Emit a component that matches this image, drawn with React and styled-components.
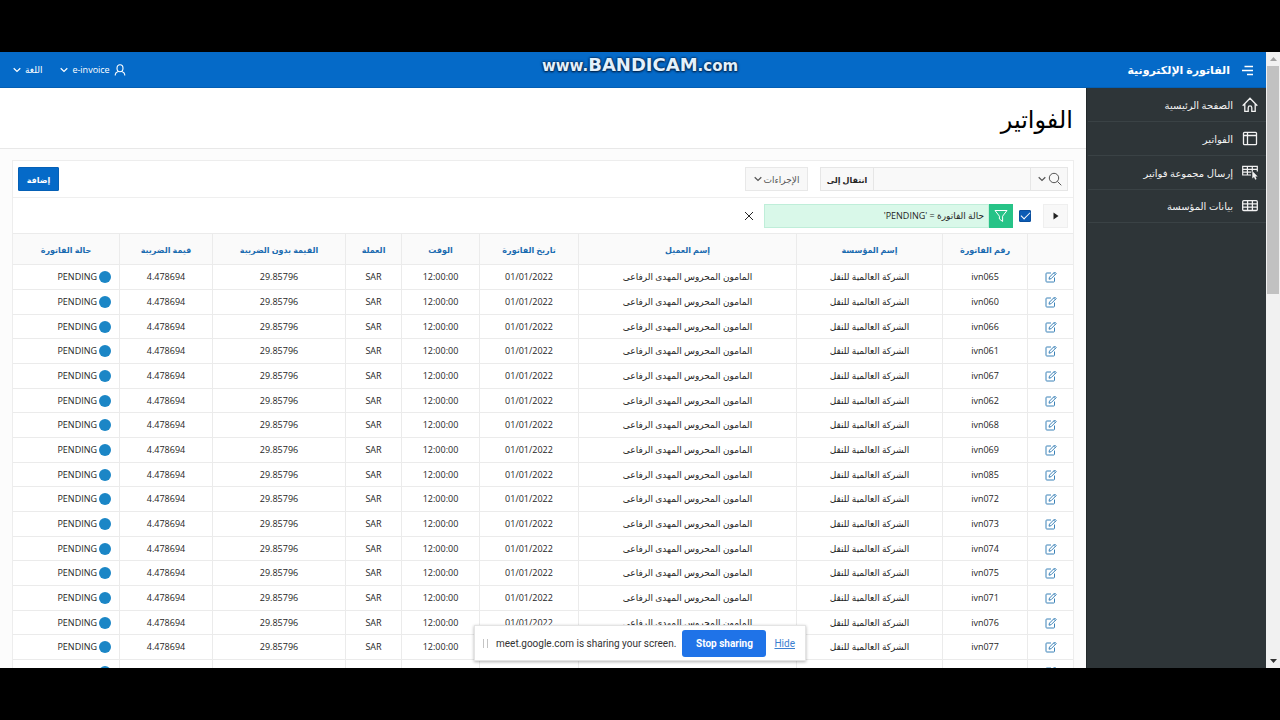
import React, { useState } from "react";
import styled, { createGlobalStyle } from "styled-components";

const GlobalStyle = createGlobalStyle`
  * {
    box-sizing: border-box;
  }

  body {
    margin: 0;
    background: #000;
    font-family: "Open Sans", "DejaVu Sans", sans-serif;
    font-size: 9px;
    color: #262626;
  }

  button,
  input {
    font: inherit;
    color: inherit;
    margin: 0;
  }
`;

const Screen = styled.div`
  position: relative;
  display: flex;
  flex-direction: column;
  height: 100vh;
  padding: 52px 0;
  overflow: hidden;
`;

const Viewport = styled.div`
  display: flex;
  flex: 1;
  min-height: 0;
  background: #fff;
`;

const Page = styled.div`
  display: flex;
  flex-direction: column;
  flex: 1;
  min-width: 0;
`;

const Scrollbar = styled.div`
  display: flex;
  flex-direction: column;
  align-items: center;
  width: 14px;
  background: #f1f1f1;
`;

const ScrollArrow = styled.div`
  display: flex;
  align-items: center;
  justify-content: center;
  height: 14px;
  color: ${(props) => (props.$active ? "#333" : "#a0a0a0")};
`;

const ScrollThumb = styled.div`
  width: 12px;
  height: 37%;
  background: #c1c1c1;
`;

const ScrollSpace = styled.div`
  flex: 1;
`;

const Header = styled.header`
  display: flex;
  align-items: center;
  justify-content: space-between;
  height: 36px;
  flex-shrink: 0;
  padding: 0 11px 0 13px;
  background: #056ac8;
  border-bottom: 1px solid #045fb4;
  color: #fff;
`;

const HeaderGroup = styled.div`
  display: flex;
  align-items: center;
  gap: ${(props) => props.$gap}px;
`;

const AppName = styled.a`
  font-size: 11px;
  font-weight: bold;
  color: #fff;
  text-decoration: none;
`;

const NavButton = styled.button`
  display: flex;
  align-items: center;
  gap: 4px;
  padding: 0;
  border: 0;
  background: transparent;
  color: #fff;
`;

const Body = styled.div`
  display: flex;
  flex: 1;
  min-height: 0;
`;

const Sidebar = styled.nav`
  width: 180px;
  flex-shrink: 0;
  background: #2e3538;
  border-left: 1px solid #22282a;
  padding-left: 1px;
`;

const SideLink = styled.a`
  display: flex;
  align-items: center;
  gap: 9px;
  height: 34px;
  padding: 0 8px;
  border-bottom: 1px solid #3a4245;
  color: #f2f2f2;
  font-size: 10px;
  text-decoration: none;

  &:last-child {
    height: 33px;
  }
`;

const Main = styled.main`
  display: flex;
  flex-direction: column;
  flex: 1;
  min-width: 0;
  background: #fcfcfc;
`;

const TitleBar = styled.div`
  display: flex;
  align-items: center;
  height: 61px;
  flex-shrink: 0;
  padding: 0 13px;
  background: #fff;
  border-bottom: 1px solid #e8e8e8;
`;

const Title = styled.h1`
  margin: 0;
  font-size: 24px;
  font-weight: normal;
  color: #000;
`;

const Report = styled.section`
  flex: 1;
  min-height: 0;
  margin: 11px 12px 0;
  overflow: hidden;
  background: #fff;
  border: 1px solid #ededed;
  border-bottom: 0;
`;

const Toolbar = styled.div`
  display: flex;
  align-items: center;
  height: 37px;
  padding: 0 5px;
  border-bottom: 1px solid #efefef;
`;

const SearchGroup = styled.div`
  display: flex;
  width: 248px;
  height: 24px;
  background: #f8f8f8;
  border: 1px solid #e6e6e6;
`;

const SearchMenu = styled.button`
  display: flex;
  align-items: center;
  gap: 2px;
  width: 37px;
  padding: 0 5px;
  border: 0;
  border-left: 1px solid #e6e6e6;
  background: transparent;
  color: #555;
`;

const SearchInput = styled.input`
  flex: 1;
  min-width: 0;
  border: 0;
  background: #f9f9f9;
  outline: 0;
`;

const GoButton = styled.button`
  width: 53px;
  padding: 0;
  border: 0;
  border-right: 1px solid #e6e6e6;
  background: transparent;
  font-size: 8px;
  font-weight: bold;
`;

const ActionsButton = styled.button`
  display: flex;
  align-items: center;
  justify-content: center;
  gap: 2px;
  width: 63px;
  height: 24px;
  margin-right: 12px;
  padding: 0;
  border: 1px solid #e8e8e8;
  background: #f8f8f8;
  color: #555;
`;

const AddButton = styled.button`
  width: 41px;
  height: 24px;
  margin-right: auto;
  padding: 0;
  border: 1px solid #0560b6;
  border-radius: 1px;
  background: #056ac8;
  color: #fff;
  font-size: 8px;
  font-weight: bold;
`;

const FilterRow = styled.div`
  display: flex;
  align-items: center;
  height: 35px;
  padding: 0 5px;
`;

const ExpandButton = styled.button`
  display: flex;
  align-items: center;
  justify-content: center;
  width: 25px;
  height: 24px;
  padding: 0;
  border: 1px solid #efefef;
  background: #f8f8f8;
`;

const FilterLabel = styled.label`
  display: flex;
  align-items: center;
`;

const FilterCheckbox = styled.input.attrs({ type: "checkbox" })`
  display: grid;
  place-content: center;
  width: 12px;
  height: 12px;
  margin: 0 12px 0 6px;
  appearance: none;
  border: 1px solid #0a4f9e;
  border-radius: 1px;
  background: ${(props) => (props.checked ? "#0b5cb5" : "#fff")};

  &:checked::before {
    content: "";
    width: 8px;
    height: 4px;
    border: solid #fff;
    border-width: 0 0 1px 1px;
    transform: translateY(-1px) rotate(-45deg);
  }
`;

const FilterIcon = styled.span`
  display: flex;
  align-items: center;
  justify-content: center;
  width: 24px;
  height: 24px;
  background: #27c387;
  color: #fff;
`;

const FilterText = styled.span`
  display: flex;
  align-items: center;
  width: 225px;
  height: 24px;
  padding: 0 4px;
  border: 1px solid #bfeed9;
  background: #d9f8e9;
`;

const IconButton = styled.button`
  display: flex;
  align-items: center;
  margin-right: 10px;
  padding: 0;
  border: 0;
  background: transparent;
`;

const Table = styled.table`
  width: 100%;
  table-layout: fixed;
  border-collapse: separate;
  border-spacing: 0;
  text-align: center;
`;

const Col = styled.col`
  width: ${(props) => props.$width}px;
`;

const HeadCell = styled.th`
  height: 32px;
  padding: 0;
  border: solid #ebebeb;
  border-width: 1px 0 1px 1px;
  background: #fafafa;
  color: #1a6bb0;
  font-size: 8px;

  &:last-child {
    border-left: 0;
  }
`;

const Row = styled.tr`
  height: 25px;

  &:nth-child(3n) {
    height: 24px;
  }
`;

const Cell = styled.td`
  padding: 0;
  border: solid #ebebeb;
  border-width: 0 0 1px 1px;
  line-height: 12px;
  white-space: nowrap;

  &:last-child {
    border-left: 0;
  }
`;

const EditLink = styled.a`
  display: flex;
  justify-content: center;
  color: #3b82b8;
`;

const Status = styled.div`
  display: flex;
  align-items: center;
  gap: 2px;
  padding: 0 8px;
`;

const Dot = styled.span`
  width: 12px;
  height: 12px;
  border-radius: 50%;
  background: #1b86c6;
`;

const Watermark = styled.div`
  position: absolute;
  top: 54px;
  left: 0;
  right: 0;
  text-align: center;
  font-family: "DejaVu Sans", sans-serif;
  font-size: 15px;
  font-weight: bold;
  line-height: 22px;
  color: #e3f1fc;
  text-shadow: 0 0 2px #02254d, 0 1px 2px #02254d, 0 0 3px #02254d;
  pointer-events: none;

  b {
    font-size: 18px;
  }
`;

const ShareBar = styled.div`
  position: absolute;
  bottom: 59px;
  left: 50%;
  display: flex;
  align-items: center;
  width: 332px;
  height: 36px;
  padding: 0 10px 0 8px;
  transform: translateX(-50%);
  background: #fff;
  border: 1px solid #e4e4e4;
  box-shadow: 0 1px 3px rgba(0, 0, 0, 0.3);
  font-family: Roboto, sans-serif;
  font-size: 10px;
  color: #333;
  white-space: nowrap;
`;

const Grip = styled.span`
  width: 5px;
  height: 9px;
  margin-right: 8px;
  border: solid #c4c4c4;
  border-width: 0 1px;
`;

const StopButton = styled.button`
  width: 84px;
  height: 27px;
  margin: 0 8px 0 auto;
  padding: 0;
  border: 0;
  border-radius: 3px;
  background: #1f73e8;
  color: #fff;
  font-weight: bold;
`;

const HideLink = styled.a`
  color: #3c7fd0;
`;

const Icon = styled.svg`
  width: ${(props) => props.$size}px;
  height: ${(props) => props.$size}px;
  flex-shrink: 0;
  fill: none;
  stroke: currentColor;
  stroke-width: ${(props) => props.$stroke || 1}px;
`;

const ChevronIcon = () => (
  <Icon $size={8} $stroke={1.2} viewBox="0 0 8 8" aria-hidden="true">
    <path d="M0.7 2.2 4 5.4 7.3 2.2" />
  </Icon>
);

const HomeIcon = () => (
  <Icon $size={16} $stroke={1.3} viewBox="0 0 16 16" aria-hidden="true">
    <path d="M0.7 8.7 8 1.2l7.3 7.5M2.8 7v7.3h3.4v-3.6a1.8 1.8 0 0 1 3.6 0v3.6h3.4V7" />
  </Icon>
);

const LayoutIcon = () => (
  <Icon $size={16} $stroke={1.3} viewBox="0 0 16 16" aria-hidden="true">
    <rect x="1.5" y="1.3" width="13" height="12.4" rx="1" />
    <path d="M1.5 4.5h13M5.5 1.3v12.4" />
  </Icon>
);

const TablePointerIcon = () => (
  <Icon $size={16} $stroke={1.2} viewBox="0 0 16 16" aria-hidden="true">
    <path d="M9 10H0.7V1.4h14.6v5M0.7 4.3h14.6M0.7 7.2h8.6M5.4 1.4V10M10.3 1.4v5" />
    <path
      d="M10.3 6v7.6l1.7-1.5 1.2 2.6 1.4-.6-1.2-2.5h2.3z"
      fill="currentColor"
      stroke="none"
    />
  </Icon>
);

const TableIcon = () => (
  <Icon $size={16} $stroke={1.3} viewBox="0 0 16 16" aria-hidden="true">
    <rect x="0.7" y="2.7" width="14.6" height="9.8" rx="1" />
    <path d="M0.7 5.9h14.6M0.7 9.2h14.6M5.6 2.7v9.8M10.4 2.7v9.8" />
  </Icon>
);

const EditIcon = () => (
  <Icon $size={12} viewBox="0 0 12 12" aria-hidden="true">
    <path d="M6 2H1.7a.7.7 0 0 0-.7.7v7.6c0 .4.3.7.7.7h7.1c.4 0 .7-.3.7-.7V6.5" />
    <path d="M4 8.2l.5-2.1L9.6 1l1.6 1.6-5.1 5.1zM8.6 2l1.6 1.6" />
  </Icon>
);

const invoices = [
  "ivn065",
  "ivn060",
  "ivn066",
  "ivn061",
  "ivn067",
  "ivn062",
  "ivn068",
  "ivn069",
  "ivn085",
  "ivn072",
  "ivn073",
  "ivn074",
  "ivn075",
  "ivn071",
  "ivn076",
  "ivn077",
  "ivn078",
];

const columns = [
  { label: "", width: 46 },
  { label: "رقم الفاتورة", width: 85 },
  { label: "إسم المؤسسة", width: 146 },
  { label: "إسم العميل", width: 218 },
  { label: "تاريخ الفاتورة", width: 99 },
  { label: "الوقت", width: 78 },
  { label: "العملة", width: 56 },
  { label: "القيمة بدون الضريبة", width: 133 },
  { label: "قيمة الضريبة", width: 93 },
  { label: "حالة الفاتورة", width: 106 },
];

const menu = [
  { label: "الصفحة الرئيسية", icon: HomeIcon },
  { label: "الفواتير", icon: LayoutIcon },
  { label: "إرسال مجموعة فواتير", icon: TablePointerIcon },
  { label: "بيانات المؤسسة", icon: TableIcon },
];

const TopNav = () => (
  <Header>
    <HeaderGroup $gap={11}>
      <NavButton aria-label="القائمة">
        <Icon $size={14} $stroke={1.4} viewBox="0 0 14 14" aria-hidden="true">
          <path d="M3.5 3.5h8.5M1 7.5h11M6 11.5h6" />
        </Icon>
      </NavButton>
      <AppName href="#">الفاتورة الإلكترونية</AppName>
    </HeaderGroup>
    <HeaderGroup $gap={18}>
      <NavButton>
        <Icon $size={12} $stroke={1.1} viewBox="0 0 12 12" aria-hidden="true">
          <ellipse cx="6" cy="4.2" rx="3" ry="3.5" />
          <path d="M1.2 11.5c0-2.3 1.3-3.5 3.2-4M10.8 11.5c0-2.3-1.3-3.5-3.2-4" />
        </Icon>
        e-invoice
        <ChevronIcon />
      </NavButton>
      <NavButton>
        اللغة
        <ChevronIcon />
      </NavButton>
    </HeaderGroup>
  </Header>
);

const SearchBar = () => (
  <Toolbar>
    <SearchGroup>
      <SearchMenu aria-label="بحث">
        <Icon $size={14} viewBox="0 0 14 14" aria-hidden="true">
          <circle cx="6" cy="6" r="4.7" />
          <path d="M9.4 9.4 13.3 13.3" />
        </Icon>
        <ChevronIcon />
      </SearchMenu>
      <SearchInput type="text" aria-label="بحث في التقرير" />
      <GoButton>انتقال إلى</GoButton>
    </SearchGroup>
    <ActionsButton>
      الإجراءات
      <ChevronIcon />
    </ActionsButton>
    <AddButton>إضافة</AddButton>
  </Toolbar>
);

const Filter = () => {
  const [checked, setChecked] = useState(true);
  return (
    <FilterRow>
      <ExpandButton aria-label="توسيع">
        <svg width="6" height="8" viewBox="0 0 6 8" aria-hidden="true">
          <path d="M0.5 0.5v7L5.5 4z" fill="#222" />
        </svg>
      </ExpandButton>
      <FilterLabel>
        <FilterCheckbox
          checked={checked}
          onChange={() => setChecked(!checked)}
        />
        <FilterIcon>
          <Icon $size={14} viewBox="0 0 14 14" aria-hidden="true">
            <path d="M1 1.5h12L8.6 7.2v5.3L5.4 10V7.2z" />
          </Icon>
        </FilterIcon>
        <FilterText>حالة الفاتورة = 'PENDING'</FilterText>
      </FilterLabel>
      <IconButton aria-label="إزالة">
        <Icon $size={10} viewBox="0 0 10 10" aria-hidden="true">
          <path d="M1 1l8 8M9 1 1 9" />
        </Icon>
      </IconButton>
    </FilterRow>
  );
};

const InvoiceTable = () => (
  <Table>
    <colgroup>
      {columns.map((column) => (
        <Col key={column.label} $width={column.width} />
      ))}
    </colgroup>
    <thead>
      <tr>
        {columns.map((column) => (
          <HeadCell key={column.label}>{column.label}</HeadCell>
        ))}
      </tr>
    </thead>
    <tbody>
      {invoices.map((invoice) => (
        <Row key={invoice}>
          <Cell>
            <EditLink href="#" aria-label={invoice}>
              <EditIcon />
            </EditLink>
          </Cell>
          <Cell>{invoice}</Cell>
          <Cell>الشركة العالمية للنقل</Cell>
          <Cell>المامون المحروس المهدى الرفاعى</Cell>
          <Cell>01/01/2022</Cell>
          <Cell>12:00:00</Cell>
          <Cell>SAR</Cell>
          <Cell>29.85796</Cell>
          <Cell>4.478694</Cell>
          <Cell>
            <Status>
              <Dot />
              PENDING
            </Status>
          </Cell>
        </Row>
      ))}
    </tbody>
  </Table>
);

const App = () => (
  <Screen>
    <GlobalStyle />
    <Viewport>
      <Page dir="rtl" lang="ar">
        <TopNav />
        <Body>
          <Sidebar>
            {menu.map(({ label, icon: MenuIcon }) => (
              <SideLink href="#" key={label}>
                <MenuIcon />
                {label}
              </SideLink>
            ))}
          </Sidebar>
          <Main>
            <TitleBar>
              <Title>الفواتير</Title>
            </TitleBar>
            <Report>
              <SearchBar />
              <Filter />
              <InvoiceTable />
            </Report>
          </Main>
        </Body>
      </Page>
      <Scrollbar>
        <ScrollArrow>
          <svg width="7" height="4" viewBox="0 0 7 4" aria-hidden="true">
            <path d="M0 4h7L3.5 0z" fill="currentColor" />
          </svg>
        </ScrollArrow>
        <ScrollThumb />
        <ScrollSpace />
        <ScrollArrow $active>
          <svg width="7" height="4" viewBox="0 0 7 4" aria-hidden="true">
            <path d="M0 0h7L3.5 4z" fill="currentColor" />
          </svg>
        </ScrollArrow>
      </Scrollbar>
    </Viewport>
    <Watermark>
      www.<b>BANDICAM</b>.com
    </Watermark>
    <ShareBar>
      <Grip />
      meet.google.com is sharing your screen.
      <StopButton>Stop sharing</StopButton>
      <HideLink href="#">Hide</HideLink>
    </ShareBar>
  </Screen>
);

export default App;
